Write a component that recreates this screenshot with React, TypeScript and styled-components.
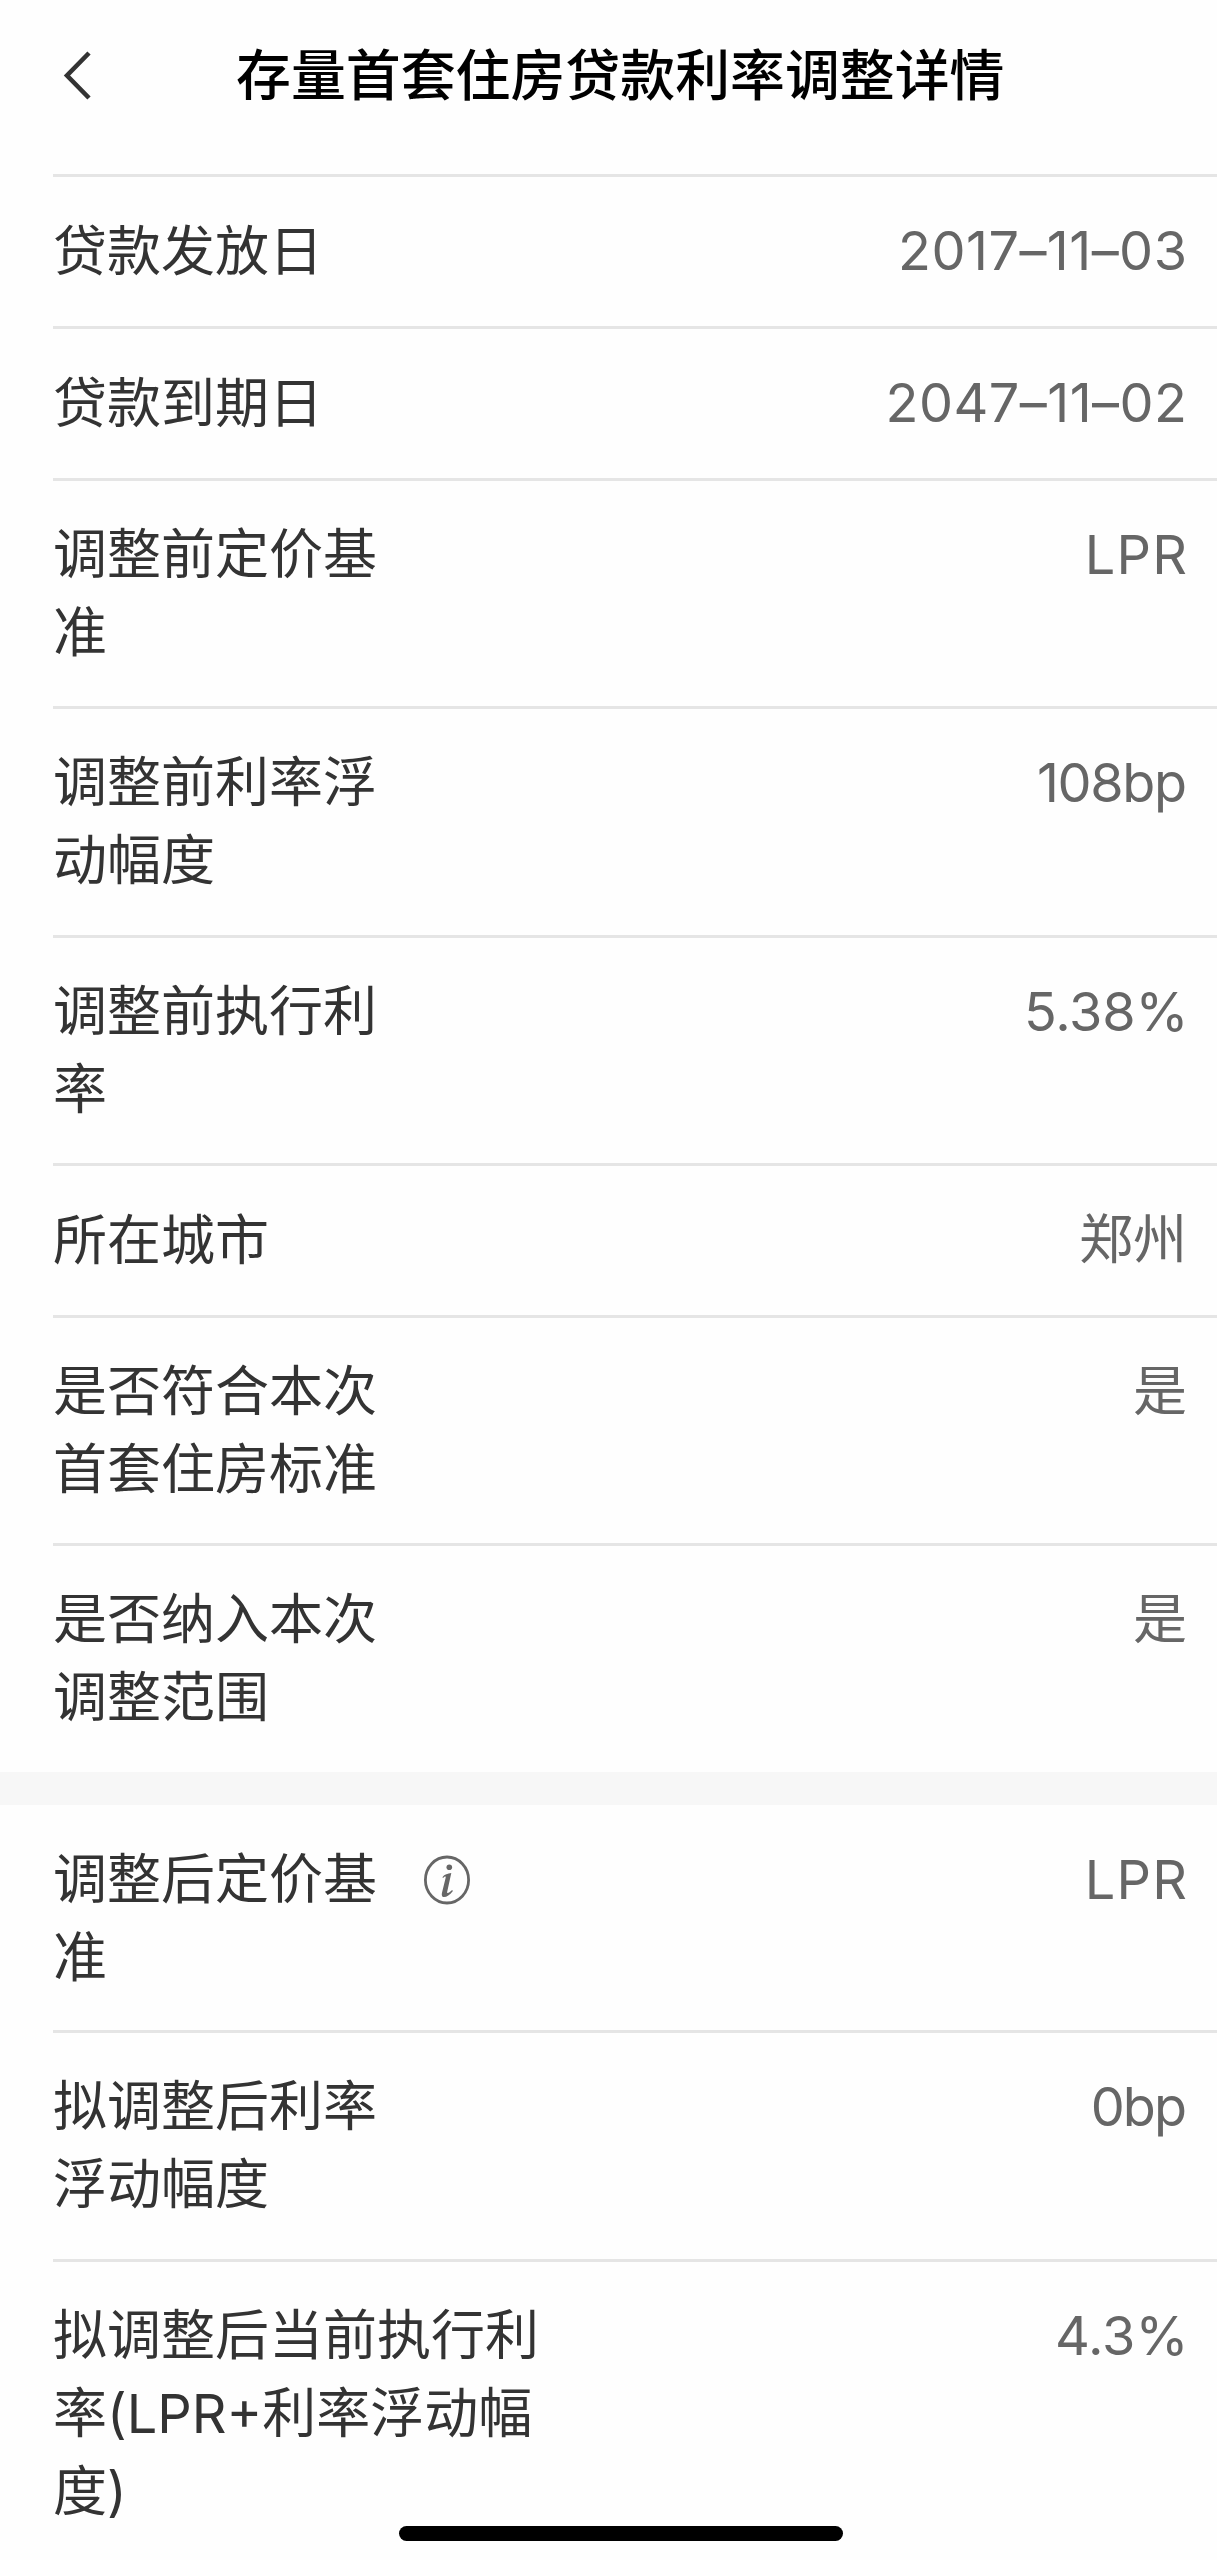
import React from "react";
import styled, { createGlobalStyle } from "styled-components";

const GlobalStyle = createGlobalStyle`
  *, *::before, *::after { box-sizing: border-box; }
  html, body { margin: 0; padding: 0; background: #fefefe; }
  body { overflow: hidden; }
`;

const Screen = styled.div`
  position: relative;
  width: 1217px;
  height: 2560px;
  overflow: hidden;
  background: #fefefe;
  font-family: Inter, "Noto Sans CJK SC", sans-serif;
  font-size: 54px;
  line-height: 78px;
`;

const Header = styled.header`
  display: flex;
  align-items: center;
  height: 174px;
  padding: 0 0 24px 62px;
`;

const BackButton = styled.button`
  display: flex;
  width: 174px;
  padding: 0;
  border: 0;
  background: none;
`;

const Title = styled.h1`
  margin: 0;
  font-size: 54.9px;
  font-weight: 500;
  line-height: 78px;
  color: #000;
  white-space: nowrap;
`;

const List = styled.section`
  padding-left: 53px;
`;

const Row = styled.div<{ $height: number; $plain?: boolean }>`
  display: flex;
  align-items: flex-start;
  height: ${(p) => p.$height}px;
  padding: ${(p) => (p.$plain ? 36 : 35)}px 30px 0 0;
  border-top: ${(p) => (p.$plain ? "0" : "3px solid #e5e5e5")};
`;

const Label = styled.div<{ $wide?: boolean; $drop?: number }>`
  width: ${(p) => (p.$wide ? 490 : 328)}px;
  flex: none;
  padding-top: ${(p) => p.$drop || 0}px;
  color: #333;
  word-break: break-all;
`;

const Value = styled.div<{ $tracking?: number; $inset?: number }>`
  margin-left: auto;
  margin-right: ${(p) => (p.$inset || 0) - (p.$tracking || 0)}px;
  color: #666;
  letter-spacing: ${(p) => p.$tracking || 0}px;
  white-space: nowrap;
`;

const InfoButton = styled.button`
  display: flex;
  margin: 14px 0 0 42px;
  padding: 0;
  border: 0;
  background: none;
`;

const Divider = styled.div`
  height: 33px;
  background: #f7f7f7;
`;

const HomeIndicator = styled.div`
  position: absolute;
  left: 399px;
  top: 2526px;
  width: 444px;
  height: 15px;
  border-radius: 8px;
  background: #000;
`;

interface Item {
  label: string;
  value: string;
  height: number;
  drop?: number;
  tracking?: number;
  inset?: number;
  wide?: boolean;
  info?: boolean;
  plain?: boolean;
}

const before: Item[] = [
  { label: "贷款发放日", value: "2017–11–03", height: 152, drop: 1, tracking: 0.45 },
  { label: "贷款到期日", value: "2047–11–02", height: 152, drop: 1, tracking: 0.45 },
  { label: "调整前定价基准", value: "LPR", height: 228, tracking: 1.2 },
  { label: "调整前利率浮动幅度", value: "108bp", height: 229, tracking: -1.4 },
  { label: "调整前执行利率", value: "5.38%", height: 228, tracking: -0.2, inset: -1.5 },
  { label: "所在城市", value: "郑州", height: 152, drop: 1 },
  { label: "是否符合本次首套住房标准", value: "是", height: 228 },
  { label: "是否纳入本次调整范围", value: "是", height: 229 },
];

const after: Item[] = [
  { label: "调整后定价基准", value: "LPR", height: 225, tracking: 1.2, info: true, plain: true },
  { label: "拟调整后利率浮动幅度", value: "0bp", height: 229, tracking: -2 },
  {
    label: "拟调整后当前执行利率(LPR+利率浮动幅度)",
    value: "4.3%",
    height: 301,
    inset: -1.5,
    wide: true,
  },
];

const BackIcon = () => (
  <svg width="32" height="52" viewBox="0 0 32 52" fill="none" stroke="#333" strokeWidth="4.6">
    <path d="M27 4 5 26.5 27 49" />
  </svg>
);

const InfoIcon = () => (
  <svg width="48" height="50" viewBox="0 0 48 50" fill="none" stroke="#666">
    <ellipse cx="24" cy="25" rx="21.6" ry="23" strokeWidth="2.8" />
    <circle cx="26.3" cy="12.3" r="2.8" fill="#666" stroke="none" />
    <path
      d="M19.4 22.2C21.5 19.5 24.8 18.4 28.3 18.1L24.2 36.7C23.7 38.9 25.8 38.2 29.1 35.1L29.9 36C26.7 40 23.7 42 21.1 42C18.6 42 18.5 39.7 19.1 37.2L22.6 22.9C23.1 21 22.2 20.9 20.1 22.9Z"
      fill="#666"
      stroke="none"
    />
  </svg>
);

const Rows = ({ items }: { items: Item[] }) => (
  <List>
    {items.map((item) => (
      <Row key={item.label} $height={item.height} $plain={item.plain}>
        <Label $wide={item.wide} $drop={item.drop}>{item.label}</Label>
        {item.info && (
          <InfoButton aria-label="info">
            <InfoIcon />
          </InfoButton>
        )}
        <Value $tracking={item.tracking} $inset={item.inset}>
          {item.value}
        </Value>
      </Row>
    ))}
  </List>
);

export default function App() {
  return (
    <Screen>
      <GlobalStyle />
      <Header>
        <BackButton aria-label="back">
          <BackIcon />
        </BackButton>
        <Title>存量首套住房贷款利率调整详情</Title>
      </Header>
      <Rows items={before} />
      <Divider />
      <Rows items={after} />
      <HomeIndicator />
    </Screen>
  );
}
